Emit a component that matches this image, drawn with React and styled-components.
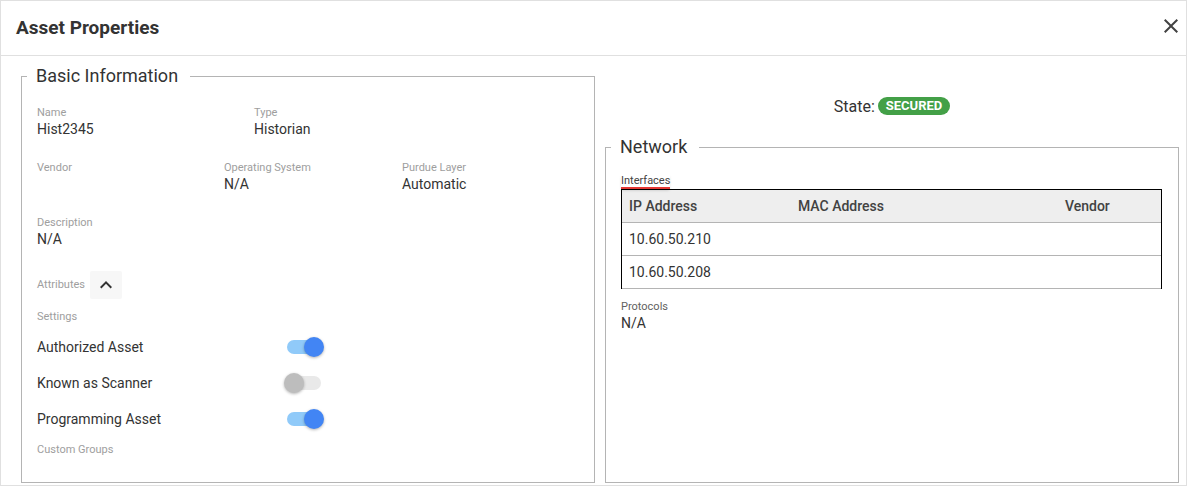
import React from 'react';
import styled, { createGlobalStyle } from 'styled-components';

const GlobalStyle = createGlobalStyle`
  html, body {
    margin: 0;
    padding: 0;
    background: #fff;
  }
  body {
    font-family: Roboto, "Liberation Sans", Arial, sans-serif;
    color: #333;
  }
  * {
    box-sizing: border-box;
  }
`;

const Dialog = styled.div`
  width: 1187px;
  height: 486px;
  border: 1px solid #e0e0e0;
  background: #fff;
  display: flex;
  flex-direction: column;
`;

const Header = styled.header`
  height: 55px;
  flex-shrink: 0;
  display: flex;
  align-items: center;
  justify-content: space-between;
  padding: 0 3px 2px 15px;
  border-bottom: 1px solid #e0e0e0;
`;

const Title = styled.h2`
  margin: 0;
  font-size: 19px;
  font-weight: 700;
  color: #333;
`;

const CloseButton = styled.button`
  width: 24px;
  height: 24px;
  margin-bottom: 3px;
  padding: 0;
  border: 0;
  background: transparent;
  color: #424242;
  display: flex;
  align-items: center;
  justify-content: center;
  cursor: pointer;
`;

const Body = styled.div`
  flex: 1;
  display: flex;
  gap: 10px;
  padding: 9px 7px 2px 20px;
  min-height: 0;
`;

const Column = styled.div`
  width: 574px;
  display: flex;
  flex-direction: column;
`;

const Panel = styled.fieldset`
  flex: 1;
  margin: 0;
  min-width: 0;
  border: 1px solid #b4b4b4;
  padding: 0 16px 0 15px;
  padding-top: ${(p) => p.$top}px;
`;

const Legend = styled.legend`
  margin-left: -10px;
  padding: 0 12px 0 9px;
  font-size: 18px;
  line-height: 22px;
  color: #333;
`;

const FieldRow = styled.div`
  display: flex;
  margin-bottom: 23px;
`;

const Field = styled.div`
  width: ${(p) => p.$width}px;
  flex-shrink: 0;
  min-height: 32px;
`;

const Label = styled.div`
  font-size: 11px;
  line-height: 14px;
  color: ${(p) => (p.$dark ? '#616161' : '#9e9e9e')};
`;

const Value = styled.div`
  font-size: 14px;
  line-height: 18px;
  color: #333;
`;

const AttributesRow = styled.div`
  display: flex;
  align-items: center;
  height: 28px;
  gap: 5px;
  margin-bottom: 11px;
`;

const ToggleButton = styled.button`
  width: 32px;
  height: 28px;
  padding: 0;
  border: 0;
  border-radius: 2px;
  background: #f7f7f7;
  color: #333;
  display: flex;
  align-items: center;
  justify-content: center;
`;

const SettingsList = styled.div`
  margin: 5px 0 6px;
`;

const SettingRow = styled.div`
  display: flex;
  align-items: center;
  height: 36px;
`;

const SettingName = styled.span`
  width: 247px;
  font-size: 14px;
  color: #333;
`;

const Switch = styled.span`
  position: relative;
  width: 40px;
  height: 20px;
  display: inline-block;
`;

const Track = styled.span`
  position: absolute;
  left: 3px;
  right: 3px;
  top: 3px;
  height: 14px;
  border-radius: 7px;
  background: ${(p) => (p.$on ? '#90caf9' : '#e9e9e9')};
`;

const Thumb = styled.span`
  position: absolute;
  top: 0;
  left: ${(p) => (p.$on ? 20 : 0)}px;
  width: 20px;
  height: 20px;
  border-radius: 50%;
  background: ${(p) => (p.$on ? '#4285f4' : '#bdbdbd')};
  box-shadow: 0 1px 3px rgba(0, 0, 0, 0.3);
`;

const StateRow = styled.div`
  height: 20px;
  margin: 31px 0 20px;
  display: flex;
  align-items: center;
  justify-content: center;
  gap: 3px;
  font-size: 16px;
  color: #333;
`;

const Badge = styled.span`
  height: 18px;
  line-height: 18px;
  padding: 0 8px;
  border-radius: 9px;
  background: #43a047;
  color: #fff;
  font-size: 13px;
  font-weight: 700;
`;

const Tab = styled.div`
  display: inline-block;
  font-size: 11px;
  line-height: 13px;
  color: #424242;
  border-bottom: 2px solid #e53935;
  box-shadow: 0 2px 3px -1px rgba(0, 0, 0, 0.2);
`;

const TableBox = styled.div`
  border: 1px solid #000;
  border-bottom: 0;
`;

const Table = styled.table`
  width: 100%;
  border-collapse: collapse;
  table-layout: fixed;
`;

const Row = styled.tr`
  height: ${(p) => (p.$head ? 32 : 33)}px;
  border-bottom: 1px solid #b4b4b4;
  background: ${(p) => (p.$head ? '#eeeeee' : '#fff')};
`;

const Th = styled.th`
  width: ${(p) => p.$width}px;
  padding: 0 7px;
  text-align: left;
  font-size: 14px;
  font-weight: 500;
  color: #424242;
`;

const Td = styled.td`
  padding: 0 7px;
  font-size: 14px;
  color: #333;
`;

const Protocols = styled.div`
  margin-top: 11px;
`;

const Close = () => (
  <svg width="24" height="24" viewBox="0 0 24 24" fill="currentColor">
    <path d="M19 6.41L17.59 5 12 10.59 6.41 5 5 6.41 10.59 12 5 17.59 6.41 19 12 13.41 17.59 19 19 17.59 13.41 12z" />
  </svg>
);

const ExpandLess = () => (
  <svg width="24" height="24" viewBox="0 0 24 24" fill="currentColor">
    <path d="M12 8l-6 6 1.41 1.41L12 10.83l4.59 4.58L18 14z" />
  </svg>
);

const settings = [
  { name: 'Authorized Asset', on: true },
  { name: 'Known as Scanner', on: false },
  { name: 'Programming Asset', on: true },
];

const interfaces = ['10.60.50.210', '10.60.50.208'];

const App = () => {
  return (
    <>
      <GlobalStyle />
      <Dialog>
        <Header>
          <Title>Asset Properties</Title>
          <CloseButton aria-label="Close">
            <Close />
          </CloseButton>
        </Header>
        <Body>
          <Column>
            <Panel $top={19}>
              <Legend>Basic Information</Legend>
              <FieldRow>
                <Field $width={217}>
                  <Label>Name</Label>
                  <Value>Hist2345</Value>
                </Field>
                <Field $width={200}>
                  <Label>Type</Label>
                  <Value>Historian</Value>
                </Field>
              </FieldRow>
              <FieldRow>
                <Field $width={187}>
                  <Label>Vendor</Label>
                </Field>
                <Field $width={178}>
                  <Label>Operating System</Label>
                  <Value>N/A</Value>
                </Field>
                <Field $width={150}>
                  <Label>Purdue Layer</Label>
                  <Value>Automatic</Value>
                </Field>
              </FieldRow>
              <FieldRow>
                <Field $width={300}>
                  <Label>Description</Label>
                  <Value>N/A</Value>
                </Field>
              </FieldRow>
              <AttributesRow>
                <Label>Attributes</Label>
                <ToggleButton aria-label="Collapse attributes">
                  <ExpandLess />
                </ToggleButton>
              </AttributesRow>
              <Label>Settings</Label>
              <SettingsList>
                {settings.map((s) => (
                  <SettingRow key={s.name}>
                    <SettingName>{s.name}</SettingName>
                    <Switch>
                      <Track $on={s.on} />
                      <Thumb $on={s.on} />
                    </Switch>
                  </SettingRow>
                ))}
              </SettingsList>
              <Label>Custom Groups</Label>
            </Panel>
          </Column>
          <Column>
            <StateRow>
              State: <Badge>SECURED</Badge>
            </StateRow>
            <Panel $top={11}>
              <Legend>Network</Legend>
              <Tab>Interfaces</Tab>
              <TableBox>
                <Table>
                  <thead>
                    <Row $head>
                      <Th $width={169}>IP Address</Th>
                      <Th $width={267}>MAC Address</Th>
                      <Th>Vendor</Th>
                    </Row>
                  </thead>
                  <tbody>
                    {interfaces.map((ip) => (
                      <Row key={ip}>
                        <Td>{ip}</Td>
                        <Td />
                        <Td />
                      </Row>
                    ))}
                  </tbody>
                </Table>
              </TableBox>
              <Protocols>
                <Label $dark>Protocols</Label>
                <Value>N/A</Value>
              </Protocols>
            </Panel>
          </Column>
        </Body>
      </Dialog>
    </>
  );
};

export default App;
